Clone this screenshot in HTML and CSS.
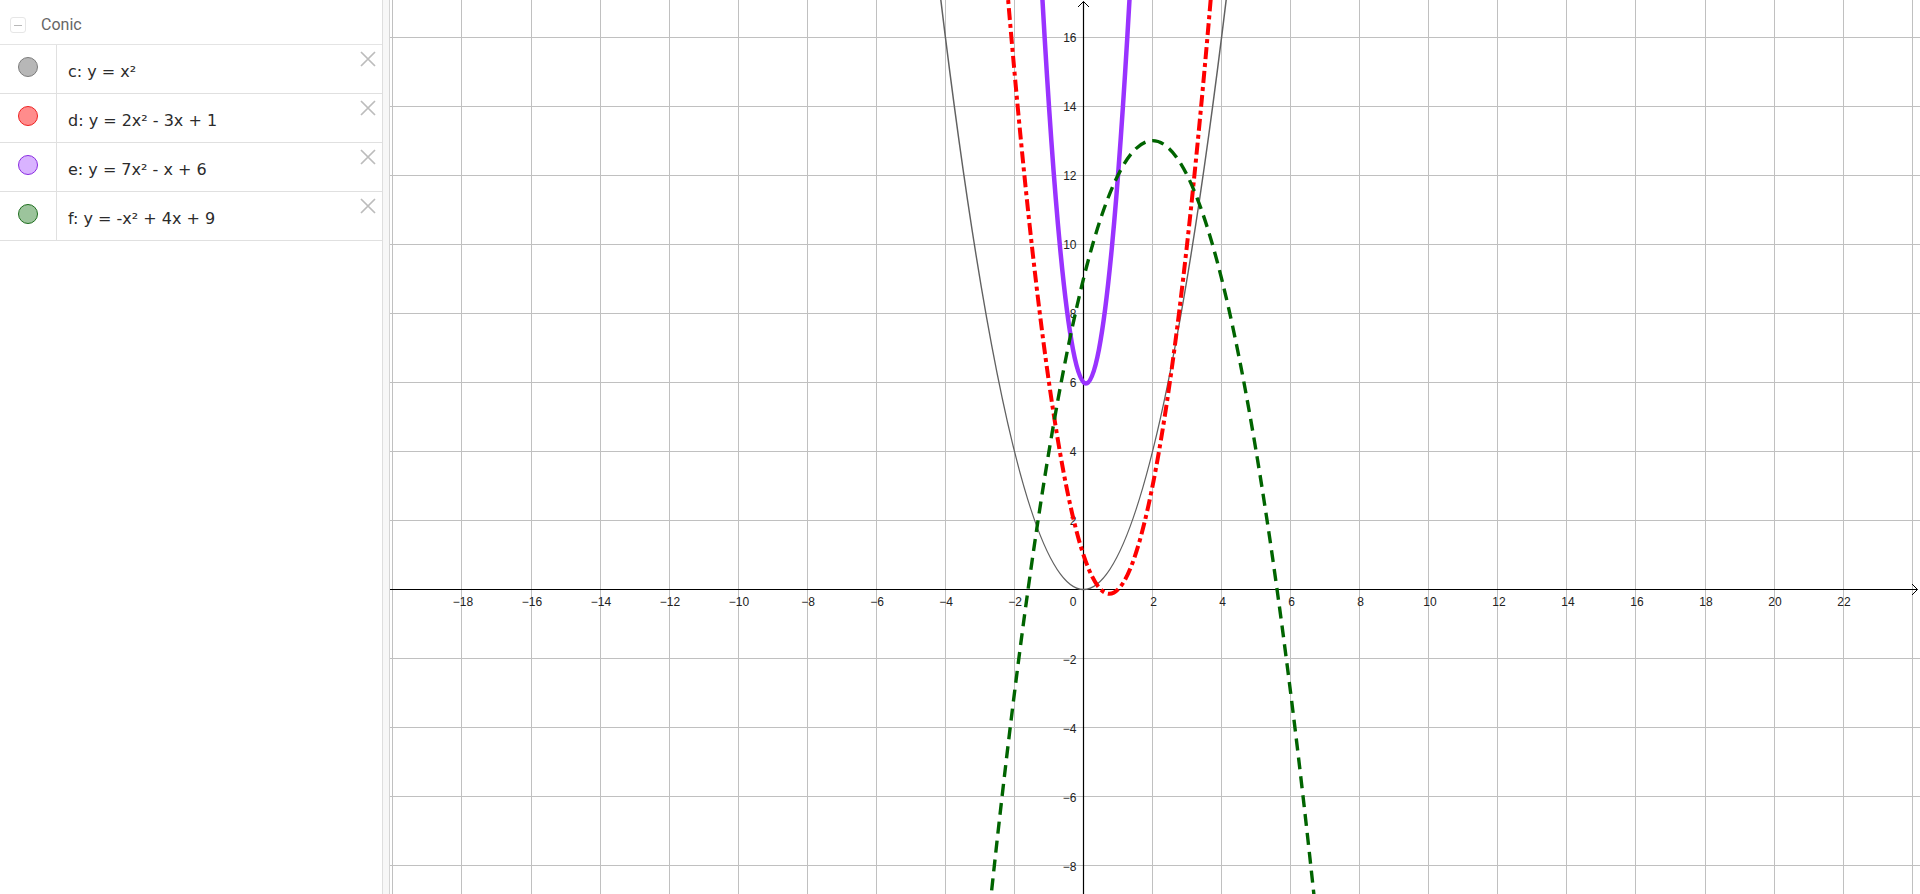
FILE: index.html
```html
<!DOCTYPE html>
<html lang="en">
<head>
<meta charset="utf-8">
<title>Conic</title>
<link rel="stylesheet" href="styles.css">
</head>
<body>
<div class="app">
  <aside class="algebra">
    <div class="group-header">
      <span class="collapse"><span class="minus"></span></span>
      <span class="group-title">Conic</span>
    </div>
    <div class="row">
      <div class="marble-cell"><span class="marble marble-c"></span></div>
      <div class="formula">c: y = x²</div>
      <svg class="close" viewBox="0 0 16 16"><path d="M1 1 L15 15 M15 1 L1 15"/></svg>
    </div>
    <div class="row">
      <div class="marble-cell"><span class="marble marble-d"></span></div>
      <div class="formula">d: y = 2x² - 3x + 1</div>
      <svg class="close" viewBox="0 0 16 16"><path d="M1 1 L15 15 M15 1 L1 15"/></svg>
    </div>
    <div class="row">
      <div class="marble-cell"><span class="marble marble-e"></span></div>
      <div class="formula">e: y = 7x² - x + 6</div>
      <svg class="close" viewBox="0 0 16 16"><path d="M1 1 L15 15 M15 1 L1 15"/></svg>
    </div>
    <div class="row">
      <div class="marble-cell"><span class="marble marble-f"></span></div>
      <div class="formula">f: y = -x² + 4x + 9</div>
      <svg class="close" viewBox="0 0 16 16"><path d="M1 1 L15 15 M15 1 L1 15"/></svg>
    </div>
  </aside>
  <div class="splitter"></div>
  <main class="graphics">
    <svg class="canvas" width="1530" height="894" viewBox="0 0 1530 894">
      <g class="grid">
        <line x1="2.9" y1="0" x2="2.9" y2="894"/>
        <line x1="71.96" y1="0" x2="71.96" y2="894"/>
        <line x1="141.02" y1="0" x2="141.02" y2="894"/>
        <line x1="210.08" y1="0" x2="210.08" y2="894"/>
        <line x1="279.14" y1="0" x2="279.14" y2="894"/>
        <line x1="348.2" y1="0" x2="348.2" y2="894"/>
        <line x1="417.26" y1="0" x2="417.26" y2="894"/>
        <line x1="486.32" y1="0" x2="486.32" y2="894"/>
        <line x1="555.38" y1="0" x2="555.38" y2="894"/>
        <line x1="624.44" y1="0" x2="624.44" y2="894"/>
        <line x1="762.56" y1="0" x2="762.56" y2="894"/>
        <line x1="831.62" y1="0" x2="831.62" y2="894"/>
        <line x1="900.68" y1="0" x2="900.68" y2="894"/>
        <line x1="969.74" y1="0" x2="969.74" y2="894"/>
        <line x1="1038.8" y1="0" x2="1038.8" y2="894"/>
        <line x1="1107.86" y1="0" x2="1107.86" y2="894"/>
        <line x1="1176.92" y1="0" x2="1176.92" y2="894"/>
        <line x1="1245.98" y1="0" x2="1245.98" y2="894"/>
        <line x1="1315.04" y1="0" x2="1315.04" y2="894"/>
        <line x1="1384.1" y1="0" x2="1384.1" y2="894"/>
        <line x1="1453.16" y1="0" x2="1453.16" y2="894"/>
        <line x1="1522.22" y1="0" x2="1522.22" y2="894"/>
        <line x1="0" y1="37.02" x2="1530" y2="37.02"/>
        <line x1="0" y1="106.08" x2="1530" y2="106.08"/>
        <line x1="0" y1="175.14" x2="1530" y2="175.14"/>
        <line x1="0" y1="244.2" x2="1530" y2="244.2"/>
        <line x1="0" y1="313.26" x2="1530" y2="313.26"/>
        <line x1="0" y1="382.32" x2="1530" y2="382.32"/>
        <line x1="0" y1="451.38" x2="1530" y2="451.38"/>
        <line x1="0" y1="520.44" x2="1530" y2="520.44"/>
        <line x1="0" y1="658.56" x2="1530" y2="658.56"/>
        <line x1="0" y1="727.62" x2="1530" y2="727.62"/>
        <line x1="0" y1="796.68" x2="1530" y2="796.68"/>
        <line x1="0" y1="865.74" x2="1530" y2="865.74"/>
      </g>
      <g class="axes">
        <line x1="0" y1="589.5" x2="1527.5" y2="589.5"/>
        <line x1="693.5" y1="1.5" x2="693.5" y2="894"/>
        <path class="arrow" d="M1522 584 L1527.5 589.5 L1522 595"/>
        <path class="arrow" d="M688 7 L693.5 1.5 L699 7"/>
      </g>
      <g class="xlabels">
        <text x="73" y="606">−18</text>
        <text x="142" y="606">−16</text>
        <text x="211" y="606">−14</text>
        <text x="280" y="606">−12</text>
        <text x="349" y="606">−10</text>
        <text x="418" y="606">−8</text>
        <text x="487" y="606">−6</text>
        <text x="556" y="606">−4</text>
        <text x="625" y="606">−2</text>
        <text x="763.5" y="606">2</text>
        <text x="832.5" y="606">4</text>
        <text x="901.5" y="606">6</text>
        <text x="970.5" y="606">8</text>
        <text x="1040" y="606">10</text>
        <text x="1109" y="606">12</text>
        <text x="1178" y="606">14</text>
        <text x="1247" y="606">16</text>
        <text x="1316" y="606">18</text>
        <text x="1385" y="606">20</text>
        <text x="1454" y="606">22</text>
      </g>
      <g class="ylabels">
        <text x="686.5" y="606">0</text>
        <text x="686.5" y="42">16</text>
        <text x="686.5" y="111">14</text>
        <text x="686.5" y="180">12</text>
        <text x="686.5" y="249">10</text>
        <text x="686.5" y="318">8</text>
        <text x="686.5" y="387">6</text>
        <text x="686.5" y="456">4</text>
        <text x="686.5" y="525">2</text>
        <text x="686.5" y="663.5">−2</text>
        <text x="686.5" y="732.5">−4</text>
        <text x="686.5" y="801.5">−6</text>
        <text x="686.5" y="870.5">−8</text>
      </g>
      <path class="curve curve-c" d="M538.12 -109.73 Q693.5 1288.73 848.88 -109.73"/>
      <path class="curve curve-d" d="M607.18 -135.63 Q719.40 1323.26 831.62 -135.63"/>
      <path class="curve curve-e" d="M644.17 -160.29 Q695.97 927.41 747.76 -160.29"/>
      <path class="curve curve-f" d="M589.91 1003.86 Q762.56 -722.64 935.21 1003.86"/>
    </svg>
  </main>
</div>
</body>
</html>
```

FILE: styles.css
```css
html, body {
  margin: 0;
  padding: 0;
  background: #ffffff;
}

body {
  font-family: "DejaVu Sans", "Liberation Sans", sans-serif;
  overflow: hidden;
}

.app {
  display: flex;
  width: 1920px;
  height: 894px;
}

.algebra {
  width: 383px;
  flex: none;
  box-sizing: border-box;
  border-right: 1px solid #dedede;
  background: #ffffff;
}

.group-header {
  display: flex;
  align-items: center;
  height: 44px;
  border-bottom: 1px solid #e4e4e4;
  box-sizing: content-box;
}

.collapse {
  display: flex;
  align-items: center;
  justify-content: center;
  width: 14px;
  height: 14px;
  margin-left: 10px;
  margin-top: 6px;
  border: 1px solid #e6e6e6;
  border-radius: 3px;
}

.minus {
  width: 8px;
  height: 1px;
  background: #b8b8b8;
}

.group-title {
  margin-left: 15px;
  margin-top: 4px;
  font-family: Roboto, "Liberation Sans", sans-serif;
  font-size: 16px;
  color: #666666;
}

.row {
  position: relative;
  display: flex;
  height: 48px;
  border-bottom: 1px solid #e0e0e0;
}

.marble-cell {
  width: 57px;
  flex: none;
  border-right: 1px solid #e0e0e0;
  display: flex;
  align-items: center;
  justify-content: center;
  padding-bottom: 4px;
  box-sizing: border-box;
}

.marble {
  display: block;
  width: 18px;
  height: 18px;
  border-radius: 50%;
  border: 1px solid #777777;
}

.marble-c { background: #b7b7b7; border-color: #7c7c7c; }
.marble-d { background: #ff8c8c; border-color: #ee2222; }
.marble-e { background: #d9b3ff; border-color: #8a2be2; }
.marble-f { background: #9cc49c; border-color: #1e6e1e; }

.formula {
  display: flex;
  align-items: center;
  padding-left: 11px;
  padding-top: 5px;
  font-size: 16px;
  color: #2b2b2b;
  white-space: nowrap;
}

.close {
  position: absolute;
  top: 6px;
  right: 6px;
  width: 16px;
  height: 16px;
  fill: none;
  stroke: #bcbcbc;
  stroke-width: 1.7;
}

.splitter {
  width: 6px;
  flex: none;
  background: #f7f7f7;
  border-right: 1px solid #d4d4d4;
}

.graphics {
  width: 1530px;
  flex: none;
  height: 894px;
  overflow: hidden;
}

.canvas {
  display: block;
}

.grid line {
  stroke: #c0c0c0;
  stroke-width: 1;
  shape-rendering: crispEdges;
}

.axes line {
  stroke: #000000;
  stroke-width: 1.2;
}

.axes .arrow {
  fill: none;
  stroke: #000000;
  stroke-width: 1;
}

.xlabels text,
.ylabels text {
  font-family: "Liberation Sans", Arial, sans-serif;
  font-size: 12px;
  fill: #222222;
}

.xlabels text {
  text-anchor: middle;
}

.ylabels text {
  text-anchor: end;
}

.curve {
  fill: none;
}

.curve-c {
  stroke: #616161;
  stroke-width: 1.5;
}

.curve-d {
  stroke: #ff0000;
  stroke-width: 4;
  stroke-dasharray: 12 4 4 4;
}

.curve-e {
  stroke: #9933ff;
  stroke-width: 4.5;
}

.curve-f {
  stroke: #006400;
  stroke-width: 3.4;
  stroke-dasharray: 12 7;
}
```
